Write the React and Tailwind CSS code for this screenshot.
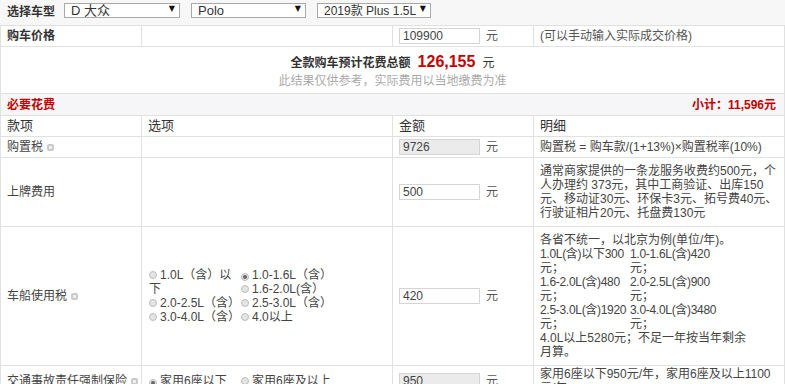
import React from 'react'

const cell = 'border border-[#e1e1e1] px-[6px] align-middle'

const Info = () => (
  <span className="inline-block w-[7px] h-[7px] ml-[4px] rounded-[2px] border-2 border-[#cacaca] bg-[#efefef] align-[0px]"></span>
)

const Radio = ({ checked }) => (
  <span className="inline-flex items-center justify-center w-[8px] h-[8px] mr-[3px] rounded-full border border-[#bdbdbd] bg-[#e4e4e4] align-[0px]">
    {checked && <span className="w-[4px] h-[4px] rounded-full bg-[#666]"></span>}
  </span>
)

const Select = ({ text, width, size = 'text-[13px]' }) => (
  <div className={`${width} h-[15px] border border-[#a9a9a9] bg-white flex justify-between pl-[6px] pr-[4px]`}>
    <span className={`${size} leading-[14px] text-[#333]`}>{text}</span>
    <span className="text-[8px] leading-[10px] text-[#111] font-['DejaVu_Sans',sans-serif]">▼</span>
  </div>
)

const Amount = ({ value, readOnly }) => (
  <div className="flex items-center">
    <div className={`w-[81px] h-[16px] border border-[#d5d5d5] px-[3px] text-[12px] leading-[14px] text-[#444] ${readOnly ? 'bg-[#ebebeb]' : 'bg-white'}`}>
      {value}
    </div>
    <span className="ml-[6px] text-[#555]">元</span>
  </div>
)

const Option = ({ label, checked }) => (
  <span className="float-left w-[92px]">
    <Radio checked={checked} />
    {label}
  </span>
)

const taxOptions = [
  { label: '1.0L（含）以下', checked: false },
  { label: '1.0-1.6L（含）', checked: true },
  { label: '1.6-2.0L(含）', checked: false },
  { label: '2.0-2.5L（含）', checked: false },
  { label: '2.5-3.0L（含）', checked: false },
  { label: '3.0-4.0L（含）', checked: false },
  { label: '4.0以上', checked: false },
]

const taxRates = [
  '1.0L(含)以下300',
  '1.0-1.6L(含)420',
  '1.6-2.0L(含)480',
  '2.0-2.5L(含)900',
  '2.5-3.0L(含)1920',
  '3.0-4.0L(含)3480',
]

export default function App() {
  return (
    <div className="w-[785px] bg-white text-[#444] text-[12px] leading-[14px] font-['Liberation_Sans','Noto_Sans_CJK_SC',sans-serif]">
      <div className="h-[25px] bg-[#f7f7f7] flex items-start pl-[7px] pt-[3px]">
        <span className="w-[57px] font-bold text-[#333] leading-[19px]">选择车型</span>
        <Select text="D 大众" width="w-[116px]" />
        <div className="w-[11px]"></div>
        <Select text="Polo" width="w-[115px]" />
        <div className="w-[11px]"></div>
        <Select text="2019款 Plus 1.5L" width="w-[114px]" size="text-[12px]" />
      </div>

      <table className="w-[785px] table-fixed border-collapse">
        <colgroup>
          <col className="w-[141px]" />
          <col className="w-[251px]" />
          <col className="w-[141px]" />
          <col />
        </colgroup>
        <tbody>
          <tr className="h-[21px]">
            <td className={`${cell} font-bold text-[#333]`}>购车价格</td>
            <td className={cell}></td>
            <td className={cell}><Amount value="109900" /></td>
            <td className={`${cell} text-[#555]`}>(可以手动输入实际成交价格)</td>
          </tr>
          <tr className="h-[47px]">
            <td colSpan={4} className={`${cell} text-center`}>
              <div className="leading-[20px] font-bold text-[#333]">
                全款购车预计花费总额
                <span className="mx-[7px] text-[16px] text-[#c40000]">126,155</span>
                <span className="font-normal">元</span>
              </div>
              <div className="mt-[1px] text-[#aaa]">此结果仅供参考，实际费用以当地缴费为准</div>
            </td>
          </tr>
          <tr className="h-[22px] bg-[#f6f6f8]">
            <td colSpan={4} className={cell}>
              <div className="flex justify-between pr-[2px] font-bold text-[#c40000]">
                <span>必要花费</span>
                <span>小计：11,596元</span>
              </div>
            </td>
          </tr>
          <tr className="h-[21px] text-[13px] text-[#333]">
            <td className={cell}>款项</td>
            <td className={cell}>选项</td>
            <td className={cell}>金额</td>
            <td className={cell}>明细</td>
          </tr>
          <tr className="h-[21px]">
            <td className={cell}>购置税<Info /></td>
            <td className={cell}></td>
            <td className={cell}><Amount value="9726" readOnly /></td>
            <td className={cell}>购置税 = 购车款/(1+13%)×购置税率(10%)</td>
          </tr>
          <tr className="h-[69px]">
            <td className={cell}>上牌费用</td>
            <td className={cell}></td>
            <td className={cell}><Amount value="500" /></td>
            <td className={`${cell} py-[6px]`}>
              通常商家提供的一条龙服务收费约500元，个人办理约 373元，其中工商验证、出库150元、移动证30元、环保卡3元、拓号费40元、行驶证相片20元、托盘费130元
            </td>
          </tr>
          <tr className="h-[139px]">
            <td className={cell}>车船使用税<Info /></td>
            <td className={`${cell} pl-[7px]`}>
              <div className="w-[184px] flow-root">
                {taxOptions.map((o) => (
                  <Option key={o.label} label={o.label} checked={o.checked} />
                ))}
              </div>
            </td>
            <td className={cell}><Amount value="420" /></td>
            <td className={`${cell} py-[6px]`}>
              <div>各省不统一，以北京为例(单位/年)。</div>
              <div className="w-[180px] flow-root">
                {taxRates.map((r) => (
                  <span key={r} className="float-left w-[90px]">
                    <span className="whitespace-nowrap tracking-[-0.3px]">{r}</span>元；
                  </span>
                ))}
              </div>
              <div className="w-[210px]">4.0L以上5280元；不足一年按当年剩余月算。</div>
            </td>
          </tr>
          <tr className="h-[30px]">
            <td className={`${cell} whitespace-nowrap`}>交通事故责任强制保险<Info /></td>
            <td className={`${cell} pl-[7px]`}>
              <div className="flow-root">
                <Option label="家用6座以下" checked />
                <Option label="家用6座及以上" />
              </div>
            </td>
            <td className={cell}><Amount value="950" readOnly /></td>
            <td className={`${cell} py-[1px]`}>家用6座以下950元/年，家用6座及以上1100元/年</td>
          </tr>
        </tbody>
      </table>
    </div>
  )
}
